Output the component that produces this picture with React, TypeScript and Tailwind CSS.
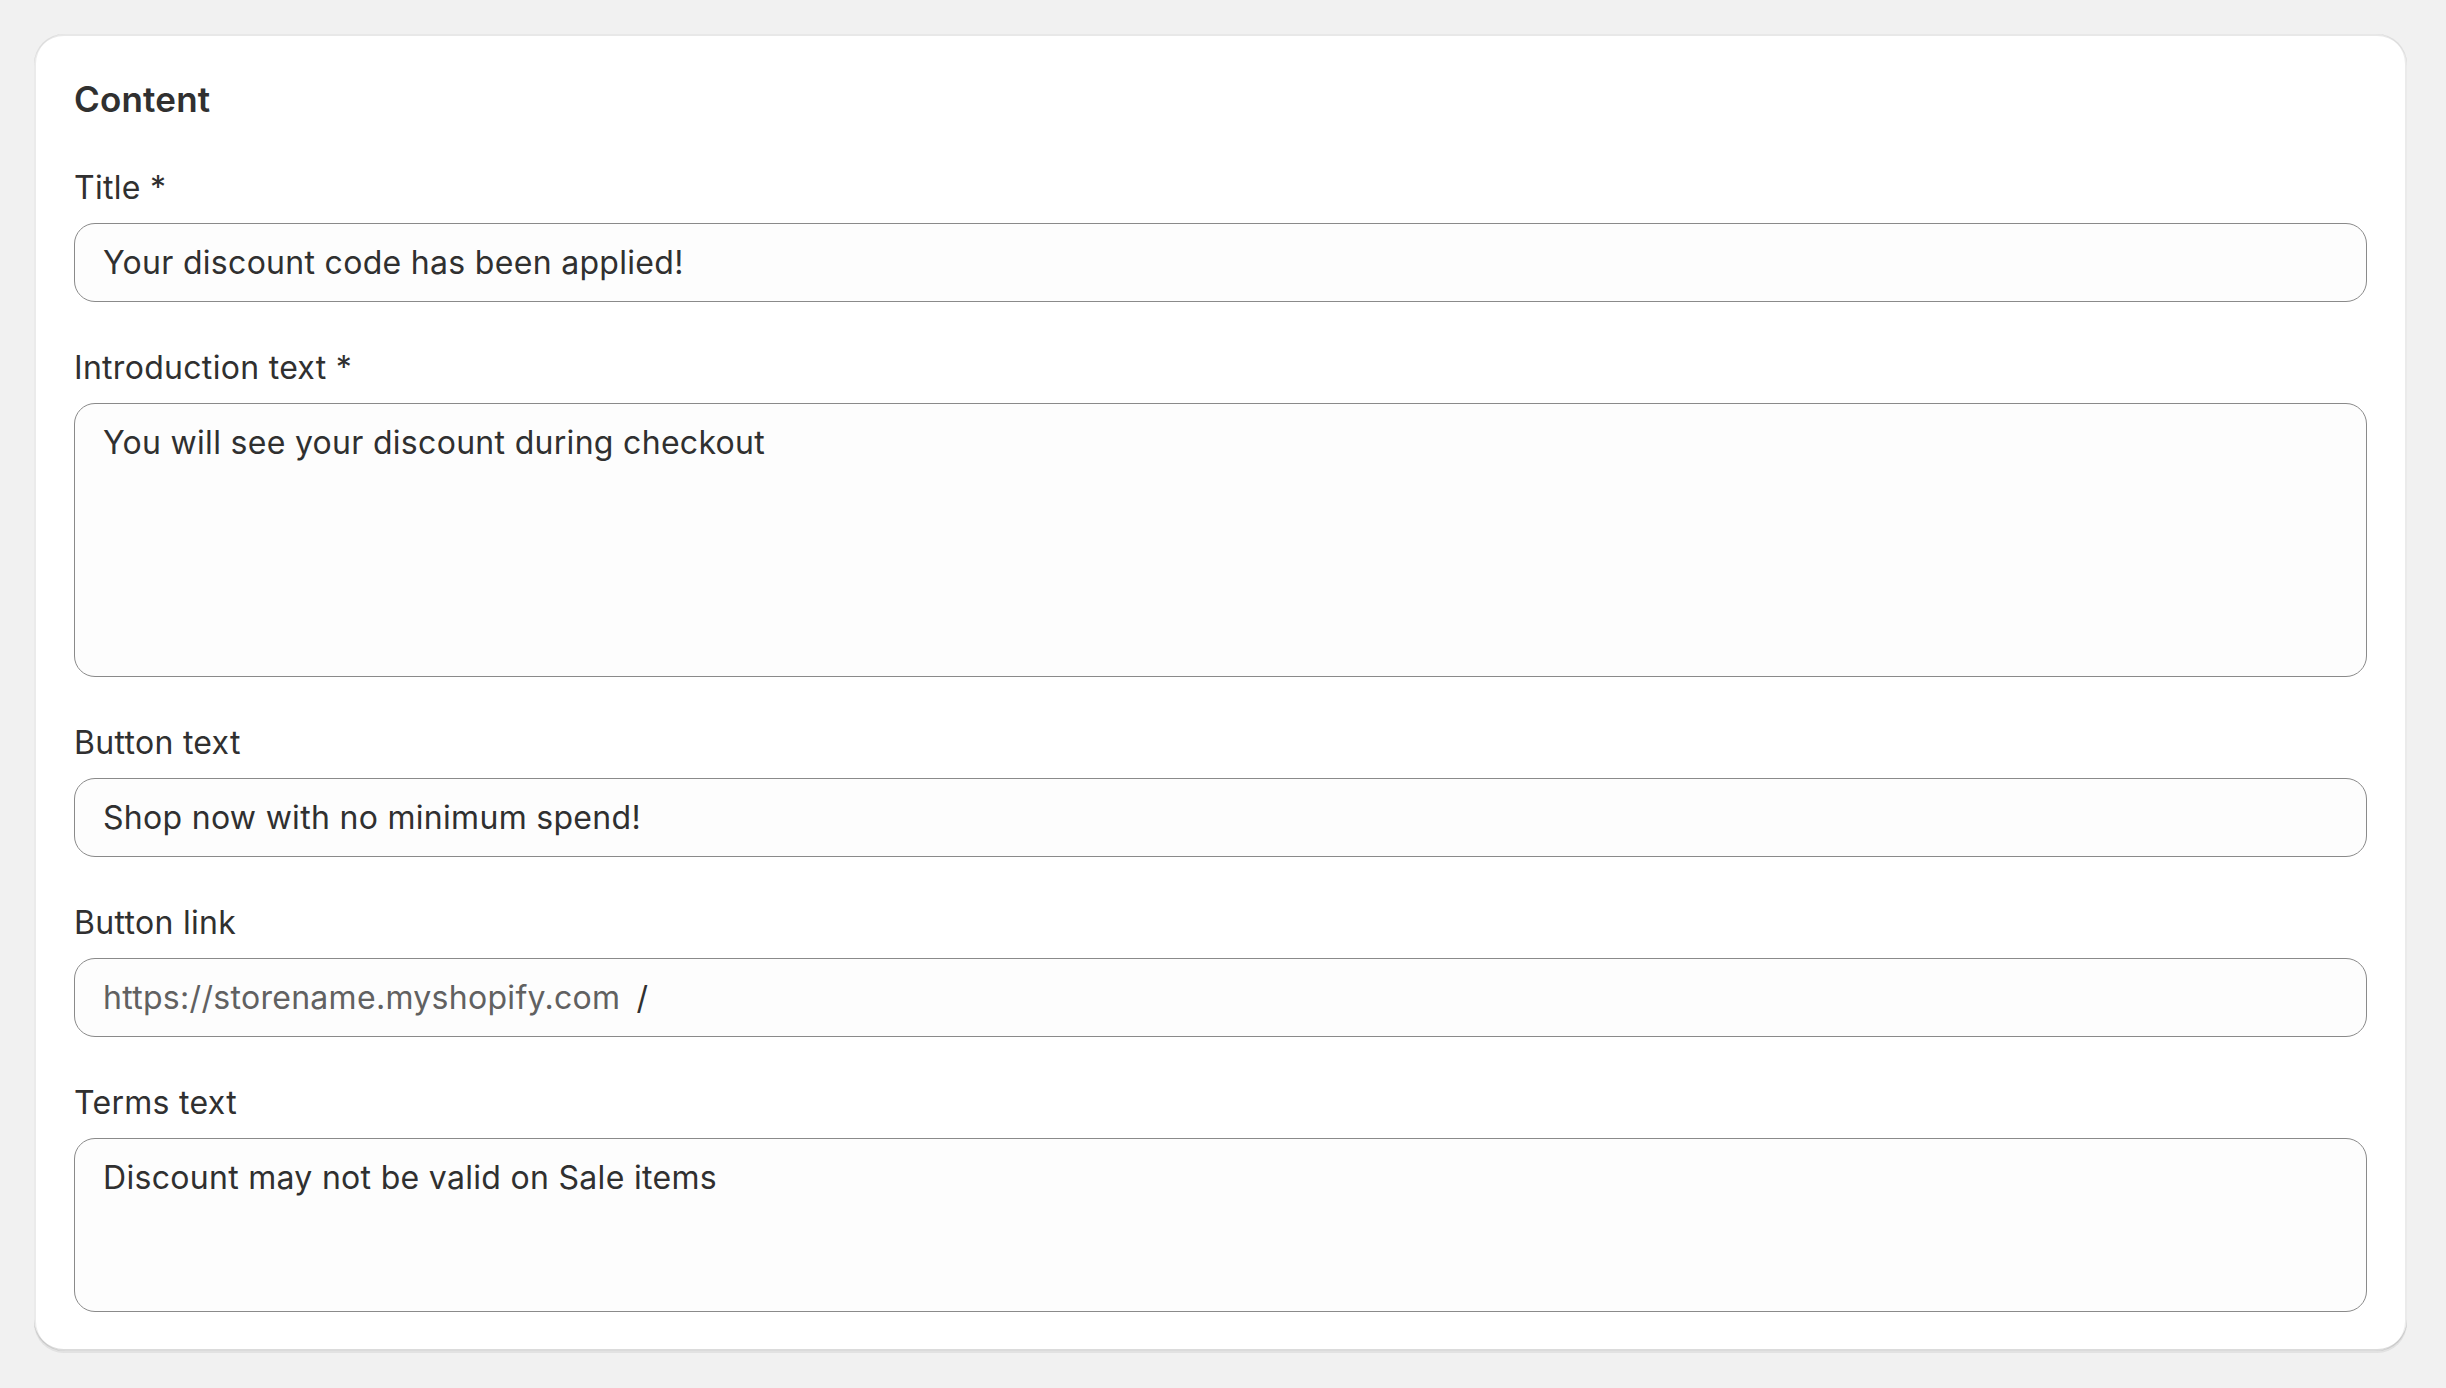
const fieldBox =
  "rounded-[21px] border border-[#8a8a8a] bg-[#fdfdfd] px-[28px] text-[32px] leading-[40px] tracking-[0.3px] text-[#303030]";

const Label = ({ children }: { children: React.ReactNode }) => (
  <div className="text-[32px] leading-[40px] tracking-[0.3px] text-[#303030]">{children}</div>
);

const TextField = ({ label, value }: { label: string; value: string }) => (
  <div className="flex flex-col gap-[15px]">
    <Label>{label}</Label>
    <div className={`${fieldBox} flex h-[79px] items-center`}>{value}</div>
  </div>
);

const TextArea = ({
  label,
  value,
  height,
}: {
  label: string;
  value: string;
  height: string;
}) => (
  <div className="flex flex-col gap-[15px]">
    <Label>{label}</Label>
    <div className={`${fieldBox} ${height} pt-[19px]`}>{value}</div>
  </div>
);

export default function App() {
  return (
    <div
      className="min-h-screen bg-[#f1f1f1] pl-[34px] pt-[34px]"
      style={{ fontFamily: "Inter, 'Noto Sans', sans-serif" }}
    >
      <div className="w-[2373px] rounded-[30px] bg-white px-[40px] pb-[39px] pt-[43px] shadow-[0_2px_0_0_rgba(26,26,26,0.07),inset_0_2px_0_0_rgba(204,204,204,0.45),inset_0_-2px_0_0_rgba(0,0,0,0.14),inset_2px_0_0_0_rgba(0,0,0,0.08),inset_-2px_0_0_0_rgba(0,0,0,0.08)]">
        <h2 className="text-[35px] font-semibold leading-[44px] tracking-[0.2px] text-[#303030]">
          Content
        </h2>
        <div className="mt-[47px] flex flex-col gap-[46px]">
          <TextField label="Title *" value="Your discount code has been applied!" />
          <TextArea
            label="Introduction text *"
            value="You will see your discount during checkout"
            height="h-[274px]"
          />
          <TextField label="Button text" value="Shop now with no minimum spend!" />
          <div className="flex flex-col gap-[15px]">
            <Label>Button link</Label>
            <div className={`${fieldBox} flex h-[79px] items-center gap-[16px]`}>
              <span className="text-[#616161]">https://storename.myshopify.com</span>
              <span>/</span>
            </div>
          </div>
          <TextArea
            label="Terms text"
            value="Discount may not be valid on Sale items"
            height="h-[174px]"
          />
        </div>
      </div>
    </div>
  );
}
